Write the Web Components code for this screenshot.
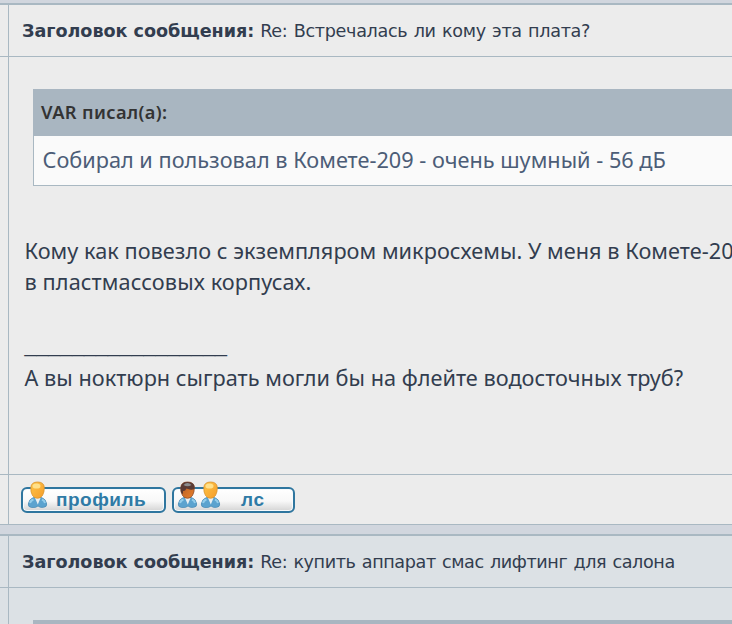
<!DOCTYPE html>
<html lang="ru">
<head>
<meta charset="utf-8">
<title>Просмотр темы</title>
<style>
  body {
    margin: 0;
    height: 624px;
    overflow: hidden;
    background: #d1d6de;
  }
</style>
</head>
<body>
<forum-topic>
  <forum-post style="--post-height: 522px; --title-spacing: -0.32px">
    <span slot="subject">Re: Встречалась ли кому эта плата?</span>
    <post-quote author="VAR">Собирал и пользовал в Комете-209 - очень шумный - 56 дБ</post-quote>
    <post-text>
      <text-line style="letter-spacing: 0.04px">Кому как повезло с экземпляром микросхемы. У меня в Комете-20</text-line>
      <text-line style="letter-spacing: 0.1px">в пластмассовых корпусах.</text-line>
    </post-text>
    <post-signature>А вы ноктюрн сыграть могли бы на флейте водосточных труб?</post-signature>
    <post-button slot="actions" kind="profile" style="width: 145px">профиль</post-button>
    <post-button slot="actions" kind="pm" style="width: 123px">лс</post-button>
  </forum-post>
  <forum-post style="--post-bg: #dce1e5; --post-height: 140px; --post-rows: 51px 84px 0; --title-spacing: -0.4px">
    <span slot="subject">Re: купить аппарат смас лифтинг для салона</span>
    <post-quote></post-quote>
  </forum-post>
</forum-topic>

<script>
class ForumTopic extends HTMLElement {
  connectedCallback() {
    this.attachShadow({ mode: 'open' });
    this.shadowRoot.innerHTML = `
      <style>
        :host {
          display: flex;
          flex-direction: column;
          gap: 9px;
          box-sizing: border-box;
          height: 624px;
          overflow: hidden;
          padding-top: 3px;
          color: #323d4f;
          white-space: nowrap;
        }
      </style>
      <slot></slot>
    `;
  }
}

class ForumPost extends HTMLElement {
  connectedCallback() {
    this.attachShadow({ mode: 'open' });
    this.shadowRoot.innerHTML = `
      <style>
        :host {
          display: grid;
          grid-template-columns: 8px minmax(0, 1fr);
          grid-template-rows: var(--post-rows, 51px 417px 49px);
          gap: 1px;
          box-sizing: border-box;
          height: var(--post-height);
          flex: none;
          overflow: hidden;
          border-top: 2px solid #a9b8c2;
          border-bottom: 1px solid #a9b8c2;
          background: #a9b8c2;
        }

        .cell {
          background: var(--post-bg, #ececec);
          min-width: 0;
          min-height: 0;
          box-sizing: border-box;
        }

        .title {
          display: flex;
          align-items: center;
          gap: 6px;
          padding-left: 13px;
          font: 17.6px/20px "DejaVu Sans", sans-serif;
        }

        .title b {
          letter-spacing: -0.04px;
        }

        .subject {
          letter-spacing: var(--title-spacing);
          word-spacing: 1px;
        }

        .body {
          padding: 32px 0 0 24px;
          overflow: hidden;
        }

        .actions {
          display: flex;
          gap: 6px;
          padding: 6px 0 0 12px;
          overflow: hidden;
        }
      </style>
      <div class="cell"></div>
      <div class="cell title"><b>Заголовок сообщения:</b><div class="subject"><slot name="subject"></slot></div></div>
      <div class="cell"></div>
      <div class="cell body"><slot></slot></div>
      <div class="cell"></div>
      <div class="cell actions"><slot name="actions"></slot></div>
    `;
    // a post without buttons has no actions row
    if (!this.querySelector('[slot="actions"]')) {
      this.shadowRoot.querySelector('.actions').style.padding = '0';
    }
  }
}

class PostQuote extends HTMLElement {
  connectedCallback() {
    const author = this.getAttribute('author');
    this.attachShadow({ mode: 'open' });
    this.shadowRoot.innerHTML = `
      <style>
        :host {
          display: block;
          font-family: "Noto Sans", sans-serif;
        }

        .author {
          height: 47px;
          padding-left: 8px;
          box-sizing: border-box;
          background: #a9b6c1;
          color: #333;
          font-size: 18.3px;
          font-weight: 600;
          line-height: 45px;
          letter-spacing: 0.35px;
        }

        .text {
          height: 50px;
          padding-left: 8.5px;
          box-sizing: border-box;
          border: solid #a9b8c2;
          border-width: 0 0 1px 1px;
          background: #fafafa;
          color: #4c5d77;
          font-size: 21.7px;
          line-height: 47px;
          letter-spacing: 0.01px;
        }
      </style>
      <div class="author">${author ? author + ' писал(а):' : ''}</div>
      <div class="text"><slot></slot></div>
    `;
  }
}

class PostText extends HTMLElement {
  connectedCallback() {
    this.attachShadow({ mode: 'open' });
    this.shadowRoot.innerHTML = `
      <style>
        :host {
          display: flex;
          flex-direction: column;
          margin: 49px 0 0 -8.5px;
          font: 21.7px/31px "Noto Sans", sans-serif;
        }
      </style>
      <slot></slot>
    `;
  }
}

class TextLine extends HTMLElement {
  connectedCallback() {
    this.attachShadow({ mode: 'open' });
    this.shadowRoot.innerHTML = `
      <style>
        :host { display: block; }
      </style>
      <slot></slot>
    `;
  }
}

class PostSignature extends HTMLElement {
  connectedCallback() {
    this.attachShadow({ mode: 'open' });
    this.shadowRoot.innerHTML = `
      <style>
        :host {
          display: block;
          margin: 33px 0 0 -8.5px;
          font: 21.7px/32px "Noto Sans", sans-serif;
          letter-spacing: 0.02px;
        }

        .rule {
          margin-top: -1px;
          padding-bottom: 1px;
          font-family: "Liberation Sans", sans-serif;
          font-size: 21.48px;
          letter-spacing: -0.03px;
        }
      </style>
      <div class="rule">_________________</div>
      <div><slot></slot></div>
    `;
  }
}

class PostButton extends HTMLElement {
  // head and shoulders, drawn on a 20x28 box
  person(x, id, dark) {
    return `
      <g transform="translate(${x} 0)">
        <path d="M0.800 23 Q1.500 18 6 16.500 L14 16.500 Q18.500 18 19.200 23 Q19.500 26 16 26.300 Q12.500 27 10.500 25 Q8.500 27 4 26.500 Q0.500 26 0.800 23Z" fill="#5ba3cf" stroke="#4a8cb5" stroke-width="0.800"/>
        <path d="M7.500 17 L10.300 23.500 L13 17Z" fill="#e9eff2"/>
        <path d="M2.500 22 Q3.500 19 6 18.500 M14.500 18.500 Q17 19.500 17.500 22" fill="none" stroke="#93cdeb" stroke-width="2"/>
        <path d="M10 1 Q16.500 1 16.800 6.500 Q17 11 15 14.500 Q13 17.300 10 17.300 Q7 17.300 5 14.500 Q3 11 3.300 6.500 Q3.800 1 10 1Z" fill="url(#${id})" stroke="${dark ? '#8a4a28' : '#d8932f'}" stroke-width="0.800"/>
        ${dark
          ? '<path d="M3.200 10 Q2 1 10 1 Q18 1 17 8 Q13 9.500 9 7.500 Q7.500 10.500 5.500 10 L5.500 13 Q3.500 12.500 3.200 10Z" fill="#5a3a34"/><path d="M6 4 Q10 0 14 4 Q10 6.500 6 4Z" fill="#8b8c8d"/>'
          : '<ellipse cx="9" cy="5" rx="4" ry="2.600" fill="#ffe08a"/>'}
      </g>
    `;
  }

  connectedCallback() {
    const pm = this.getAttribute('kind') === 'pm';
    this.attachShadow({ mode: 'open' });
    this.shadowRoot.innerHTML = `
      <style>
        :host {
          display: grid;
          height: 33px;
          font: bold 19px/26px "Liberation Sans", sans-serif;
          color: #2f7ba6;
        }

        .face, svg {
          grid-area: 1 / 1;
        }

        .face {
          box-sizing: border-box;
          height: 26px;
          margin-top: 6px;
          padding-left: ${pm ? 67 : 33}px;
          border: 2px solid #2f769f;
          border-radius: 6px;
          background: linear-gradient(#fff, #f8f8f8 55%, #d4d4d4);
          box-shadow: inset 0 0 0 1px #f7fafc;
          line-height: 22px;
          letter-spacing: ${pm ? 0.8 : 0.5}px;
        }

        svg {
          z-index: 1;
        }
      </style>
      <div class="face"><slot></slot></div>
      <svg width="60" height="28" viewBox="0 0 60 28">
        <defs>
          <linearGradient id="fair" x1="0" y1="0" x2="1" y2="1">
            <stop offset="0" stop-color="#ffc547"/>
            <stop offset="1" stop-color="#f49c2b"/>
          </linearGradient>
          <linearGradient id="dark" x1="0" y1="0" x2="1" y2="1">
            <stop offset="0" stop-color="#b25c26"/>
            <stop offset="1" stop-color="#e8802c"/>
          </linearGradient>
        </defs>
        ${pm ? this.person(5.500, 'dark', true) + this.person(28.500, 'fair') : this.person(6.500, 'fair')}
      </svg>
    `;
  }
}

customElements.define('forum-topic', ForumTopic);
customElements.define('forum-post', ForumPost);
customElements.define('post-quote', PostQuote);
customElements.define('post-text', PostText);
customElements.define('text-line', TextLine);
customElements.define('post-signature', PostSignature);
customElements.define('post-button', PostButton);
</script>
</body>
</html>
